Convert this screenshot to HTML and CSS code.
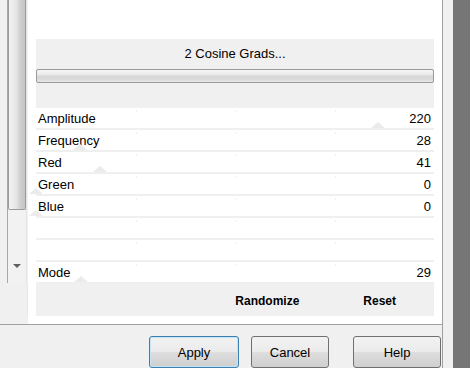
FILE: index.html
```html
<!DOCTYPE html>
<html>
<head>
    <title>2 Cosine Grads</title>
    <link rel="stylesheet" href="styles.css">
</head>
<body>
    <div class="window">
        <div class="main">
            <div class="top">
                <div class="side">
                    <div class="scroll">
                        <div class="thumb"></div>
                        <div class="track"></div>
                        <div class="arrow"></div>
                    </div>
                    <div class="side-foot"></div>
                </div>
                <div class="panel">
                    <div class="header">
                        <div class="title">2 Cosine Grads...</div>
                        <div class="bar"></div>
                    </div>
                    <div class="rows">
                        <div class="row"><span>Amplitude</span><span>220</span><i class="mark" style="left: 335px"></i></div>
                        <div class="row"><span>Frequency</span><span>28</span><i class="mark" style="left: 37px"></i></div>
                        <div class="row"><span>Red</span><span>41</span><i class="mark" style="left: 57px"></i></div>
                        <div class="row"><span>Green</span><span>0</span><i class="mark" style="left: -7px"></i></div>
                        <div class="row"><span>Blue</span><span>0</span><i class="mark" style="left: -7px"></i></div>
                        <div class="row"></div>
                        <div class="row"></div>
                        <div class="row"><span>Mode</span><span>29</span><i class="mark" style="left: 38px"></i></div>
                    </div>
                    <div class="actions">
                        <span>Randomize</span>
                        <span>Reset</span>
                    </div>
                </div>
            </div>
            <div class="buttons">
                <button class="btn apply">Apply</button>
                <button class="btn cancel">Cancel</button>
                <button class="btn help">Help</button>
            </div>
        </div>
        <div class="gutter"></div>
        <div class="dark"></div>
    </div>
</body>
</html>
```

FILE: styles.css
```css
* {
    margin: 0;
    padding: 0;
    box-sizing: border-box;
}

html,
body {
    width: 100%;
    height: 100%;
    overflow: hidden;
}

body {
    background-color: #f0f0f0;
    font-family: "Liberation Sans", Arial, sans-serif;
    font-size: 13px;
    color: #000;
}

.window {
    display: flex;
    height: 368px;
}

.main {
    width: 442px;
    display: flex;
    flex-direction: column;
}

.top {
    display: flex;
    height: 326px;
    border-bottom: 1px solid #a0a0a0;
}

.side {
    width: 28px;
    display: flex;
    flex-direction: column;
}

.scroll {
    height: 283px;
    margin-left: 7px;
    width: 20px;
    border-left: 1px solid #a8a8a8;
    border-right: 1px solid #e4e4e4;
    display: flex;
    flex-direction: column;
    background-color: #f2f2f2;
}

.thumb {
    height: 210px;
    border: 1px solid #9c9c9c;
    border-top: 0;
    border-radius: 0 0 2px 2px;
    background: linear-gradient(to right, #f2f2f2 0%, #e6e6e6 45%, #cfcfcf 70%, #c4c4c4 100%);
}

.track {
    flex: 1;
}

.arrow {
    height: 20px;
    display: flex;
    justify-content: center;
    align-items: flex-start;
    padding-top: 1px;
}

.arrow::before {
    content: "";
    border-left: 4px solid transparent;
    border-right: 4px solid transparent;
    border-top: 4px solid #606060;
}

.side-foot {
    flex: 1;
    border-right: 1px solid #e6e6e6;
    margin-bottom: 9px;
}

.panel {
    flex: 1;
    background-color: #fff;
    padding: 39px 8px 0 8px;
}

.header {
    background-color: #f0f0f0;
    height: 69px;
    padding-top: 7px;
}

.title {
    text-align: center;
    line-height: 16px;
    height: 16px;
}

.bar {
    margin-top: 7px;
    height: 14px;
    border: 1px solid #9a9a9a;
    border-radius: 2px;
    background: linear-gradient(to bottom, #f6f6f6 0%, #ececec 35%, #d6d6d6 55%, #dcdcdc 80%, #e8e8e8 100%);
}

.row {
    position: relative;
    height: 22px;
    border-bottom: 2px solid #efefef;
    display: flex;
    justify-content: space-between;
    align-items: center;
    padding: 0 3px 0 2px;
    background-image: linear-gradient(#efefef, #efefef), linear-gradient(#efefef, #efefef), linear-gradient(#efefef, #efefef);
    background-size: 1px 2px;
    background-repeat: no-repeat;
    background-position: 100px 2px, 200px 2px, 299px 2px;
}

.mark {
    position: absolute;
    bottom: 0;
    width: 0;
    height: 0;
    border-left: 7px solid transparent;
    border-right: 7px solid transparent;
    border-bottom: 6px solid #ebebeb;
}

.actions {
    height: 32px;
    background-color: #f0f0f0;
    display: flex;
    justify-content: flex-end;
    align-items: center;
    gap: 64px;
    padding: 2px 38px 0 0;
    font-size: 12px;
    font-weight: bold;
}

.buttons {
    display: flex;
    padding: 11px 0 0 149px;
}

.btn {
    height: 32px;
    font-family: "Liberation Sans", Arial, sans-serif;
    font-size: 13px;
    color: #000;
    border: 1px solid #707070;
    border-radius: 3px;
    background: linear-gradient(to bottom, #f2f2f2 0%, #ebebeb 48%, #dddddd 52%, #cfcfcf 100%);
    padding-top: 1px;
}

.apply {
    width: 90px;
    border-color: #3c7fb1;
    box-shadow: inset 0 0 0 1px #c4e5f6;
}

.cancel {
    width: 78px;
    margin-left: 12px;
}

.help {
    width: 88px;
    margin-left: 24px;
}

.gutter {
    width: 11px;
    border-left: 1px solid #a0a0a0;
    background-color: #f0f0f0;
}

.dark {
    flex: 1;
    background-color: #767676;
}
```
